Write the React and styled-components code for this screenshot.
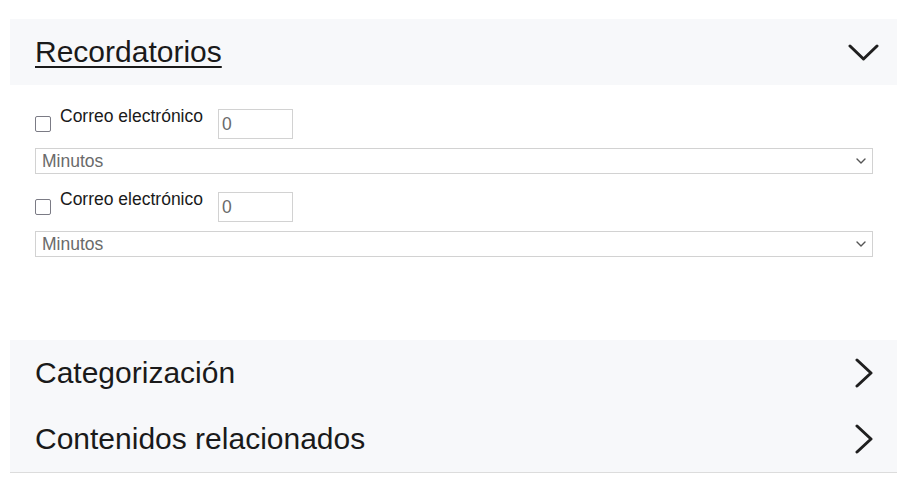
import React from "react";
import styled, { createGlobalStyle } from "styled-components";

const GlobalStyle = createGlobalStyle`
  body {
    margin: 0;
    background: #fff;
    font-family: "Liberation Sans", Arial, sans-serif;
    color: #1a1a1a;
  }
`;

const ChevronDown = () => (
  <svg width="31" height="17" viewBox="0 0 31 17" fill="none">
    <path d="M2 2 L15.5 15 L29 2" stroke="#1f1f1f" strokeWidth="3" strokeLinecap="round" strokeLinejoin="round" />
  </svg>
);

const ChevronRight = () => (
  <svg width="18" height="30" viewBox="0 0 18 30" fill="none">
    <path d="M2 2 L16 15 L2 28" stroke="#1f1f1f" strokeWidth="3" strokeLinecap="round" strokeLinejoin="round" />
  </svg>
);

const SmallChevron = () => (
  <svg width="10" height="6" viewBox="0 0 10 6" fill="none">
    <path d="M1 1 L5 5 L9 1" stroke="#555" strokeWidth="1.4" strokeLinecap="round" strokeLinejoin="round" />
  </svg>
);

function ReminderRow() {
  return (
    <Reminder>
      <Line>
        <Check type="checkbox" />
        <Label>Correo electrónico</Label>
        <Amount type="text" defaultValue="0" />
      </Line>
      <SelectWrap>
        <Select defaultValue="min">
          <option value="min">Minutos</option>
          <option value="h">Horas</option>
          <option value="d">Días</option>
        </Select>
        <SelectIcon><SmallChevron /></SelectIcon>
      </SelectWrap>
    </Reminder>
  );
}

export default function App() {
  return (
    <>
      <GlobalStyle />
      <Page>
        <Panel>
          <Header>
            <Title $active>Recordatorios</Title>
            <IconBox><ChevronDown /></IconBox>
          </Header>
          <Body>
            <ReminderRow />
            <ReminderRow />
          </Body>
        </Panel>
        <Panel $closed>
          <Header>
            <Title>Categorización</Title>
            <IconBox><ChevronRight /></IconBox>
          </Header>
        </Panel>
        <Panel $closed $last>
          <Header>
            <Title>Contenidos relacionados</Title>
            <IconBox><ChevronRight /></IconBox>
          </Header>
        </Panel>
      </Page>
    </>
  );
}

const Page = styled.div`
  padding: 19px 0 0 10px;
`;

const Panel = styled.section`
  background: ${(p) => (p.$closed ? "#f7f8fa" : "transparent")};
  border-bottom: ${(p) => (p.$last ? "1px solid #dcdcdc" : "none")};
`;

const Header = styled.div`
  height: 66px;
  background: #f7f8fa;
  display: flex;
  align-items: center;
  justify-content: space-between;
  padding: 0 18px 0 25px;
  box-sizing: border-box;
`;

const IconBox = styled.span`
  width: 31px;
  display: flex;
  justify-content: center;
  svg {
    display: block;
  }
`;

const Title = styled.h2`
  margin: 0;
  font-size: 30px;
  font-weight: 400;
  line-height: 34px;
  color: #1a1a1a;
  text-decoration: ${(p) => (p.$active ? "underline" : "none")};
  text-decoration-thickness: 2px;
  text-underline-offset: 4px;
`;

const Body = styled.div`
  padding: 24px 24px 83px 25px;
  display: flex;
  flex-direction: column;
  gap: 18px;
`;

const Reminder = styled.div`
  display: flex;
  flex-direction: column;
  gap: 9px;
`;

const Line = styled.div`
  display: flex;
  align-items: flex-start;
`;

const Check = styled.input`
  appearance: none;
  width: 16px;
  height: 16px;
  margin: 7px 0 0 0;
  border: 1.5px solid #7b7b85;
  border-radius: 2px;
  background: #fff;
  box-sizing: border-box;
`;

const Label = styled.span`
  margin: -3px 0 0 9px;
  font-size: 17.5px;
  line-height: 20px;
  color: #1a1a1a;
`;

const Amount = styled.input`
  margin-left: 15px;
  width: 75px;
  height: 30px;
  box-sizing: border-box;
  border: 1px solid #d2d2d2;
  padding: 0 3px;
  font-family: "Liberation Sans", Arial, sans-serif;
  font-size: 17.5px;
  color: #6a6a6a;
  outline: none;
`;

const SelectWrap = styled.div`
  position: relative;
`;

const Select = styled.select`
  appearance: none;
  width: 100%;
  height: 26px;
  box-sizing: border-box;
  border: 1px solid #d2d2d2;
  border-radius: 0;
  background: #fff;
  padding: 0 6px;
  font-family: "Liberation Sans", Arial, sans-serif;
  font-size: 17.5px;
  color: #6a6a6a;
  outline: none;
`;

const SelectIcon = styled.span`
  position: absolute;
  right: 7px;
  top: 10px;
  pointer-events: none;
  svg {
    display: block;
  }
`;
